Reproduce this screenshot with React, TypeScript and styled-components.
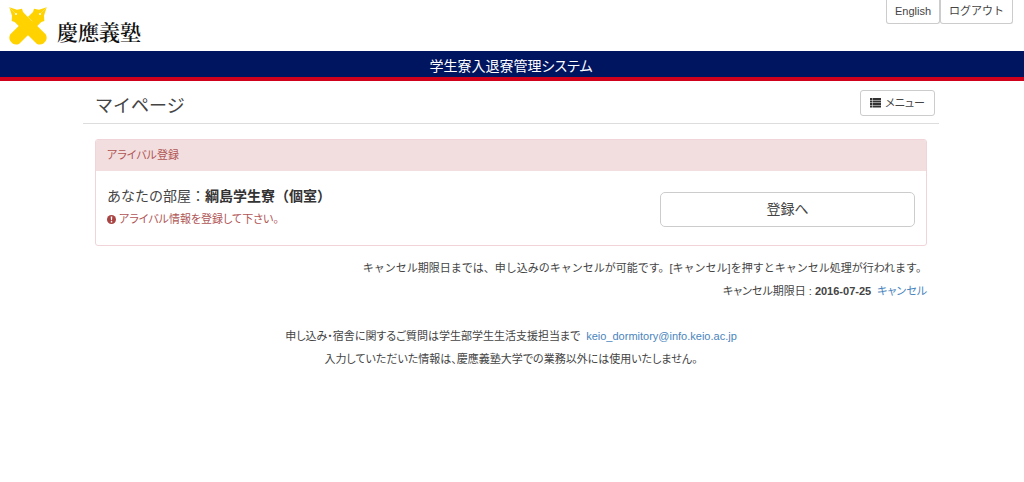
import React from "react";
import styled, { createGlobalStyle } from "styled-components";

const GlobalStyle = createGlobalStyle`
  * { box-sizing: border-box; }
  body {
    margin: 0;
    background: #fff;
    color: #444;
    font: 11px/15px "Liberation Sans", "Noto Sans CJK JP", sans-serif;
  }
`;

const Header = styled.header`
  display: flex;
  justify-content: space-between;
  align-items: flex-start;
  height: 51px;
  padding: 0 11px 0 9px;
`;

const Brand = styled.a`
  display: flex;
  gap: 10px;
  padding-top: 7px;
  color: #111;
  text-decoration: none;
`;

const BrandName = styled.span`
  padding-top: 10px;
  font: 600 21px/28px "Noto Serif CJK JP", "Noto Sans CJK JP", serif;
`;

const Button = styled.button`
  display: inline-flex;
  align-items: center;
  justify-content: center;
  gap: 4px;
  height: 26px;
  padding: 0 9px;
  border: 1px solid #ccc;
  border-radius: 3px;
  background: #fff;
  color: #444;
  font: inherit;
  white-space: nowrap;
  cursor: pointer;
`;

const MenuButton = styled(Button)`
  font-feature-settings: "palt";
`;

const TabButton = styled(Button)`
  height: 24px;
  padding: 0 8px;
  border-top: 0;
  border-radius: 0 0 3px 3px;
`;

const LargeButton = styled(Button)`
  flex: 0 1 255px;
  height: 35px;
  border-radius: 5px;
  font-size: 14px;
`;

const UserNav = styled.nav`
  display: flex;
`;

const Banner = styled.div`
  padding: 5px 2px 1px 0;
  border-bottom: 4px solid #d0021b;
  background: #001560;
  color: #fff;
  font-size: 14px;
  font-feature-settings: "palt";
  line-height: 20px;
  text-align: center;
`;

const Main = styled.main`
  padding-right: 2px;
`;

const Container = styled.div`
  max-width: 856px;
  margin: 0 auto;
`;

const TitleRow = styled.div`
  display: flex;
  align-items: flex-start;
  justify-content: space-between;
  padding: 9px 4px 4px 12px;
  border-bottom: 1px solid #ddd;
`;

const Title = styled.h1`
  margin: 0;
  padding-top: 3px;
  font-size: 18px;
  font-weight: 400;
  line-height: 26px;
`;

const Body = styled.div`
  padding: 15px 12px 0;
`;

const Panel = styled.section`
  border: 1px solid #f0d4d9;
  border-radius: 3px;
  overflow: hidden;
`;

const PanelHeading = styled.h2`
  margin: 0;
  padding: 8px 11px;
  background: #f2dede;
  color: #b05555;
  font-size: 11px;
  font-weight: 400;
  font-feature-settings: "palt";
  line-height: 15px;
`;

const PanelBody = styled.div`
  display: flex;
  justify-content: space-between;
  align-items: flex-end;
  padding: 15px 11px 18px;
`;

const Room = styled.p`
  margin: 0 0 6px;
  font-size: 14px;
  line-height: 20px;

  strong { color: #333; }
`;

const Alert = styled.p`
  display: flex;
  align-items: center;
  gap: 3px;
  margin: 0;
  color: #b05555;
  font-feature-settings: "palt";
`;

const Notes = styled.div`
  display: grid;
  gap: 8px;
  padding-top: 15px;
  text-align: right;

  p { margin: 0; }
`;

const Deadline = styled.p`
  font-feature-settings: "palt";
`;

const Contact = styled(Notes)`
  padding-top: 30px;
  font-feature-settings: "palt";
  text-align: center;
`;

const Link = styled.a`
  margin-left: 6px;
  color: #4a85bd;
  text-decoration: none;
`;

const PEN =
  "M15 13 L38 20 L53 17 L56 27 L124 94 Q130 104 124 114 Q114 129 98 123 L31 57 L22 54 L23 38 Z";

const PensLogo = () => (
  <svg width="38" height="38" viewBox="14 12 114 114" aria-hidden="true">
    <path d={PEN} fill="#ffd200" transform="translate(142 0) scale(-1 1)" />
    <path d={PEN} fill="#ffd200" />
    <path
      d="M60 31 L84 55 M17 15 L33 31 M125 15 L109 31"
      fill="none"
      stroke="#fff"
      strokeWidth="1"
    />
    <circle cx="35" cy="33" r="3" fill="#fff" />
    <circle cx="107" cy="33" r="3" fill="#fff" />
  </svg>
);

const ListIcon = () => (
  <svg width="11" height="10" viewBox="0 0 22 20" fill="#333" aria-hidden="true">
    <path d="M0 0h4v4H0zM5 0h17v4H5zM0 5h4v4H0zM5 5h17v4H5zM0 10h4v4H0zM5 10h17v4H5zM0 15h4v4H0zM5 15h17v4H5z" />
  </svg>
);

const AlertIcon = () => (
  <svg width="9" height="9" viewBox="0 0 9 9" aria-hidden="true">
    <circle cx="4.5" cy="4.5" r="4.5" fill="#a94442" />
    <path d="M3.7 1.5h1.6l-.3 3.7H4zM3.8 6h1.4v1.4H3.8z" fill="#fff" />
  </svg>
);

export default function App() {
  return (
    <>
      <GlobalStyle />
      <Header>
        <Brand href="#">
          <PensLogo />
          <BrandName>慶應義塾</BrandName>
        </Brand>
        <UserNav>
          <TabButton>English</TabButton>
          <TabButton>ログアウト</TabButton>
        </UserNav>
      </Header>
      <Banner>学生寮入退寮管理システム</Banner>
      <Main>
        <Container>
          <TitleRow>
            <Title>マイページ</Title>
            <MenuButton><ListIcon />メニュー</MenuButton>
          </TitleRow>
          <Body>
            <Panel>
              <PanelHeading>アライバル登録</PanelHeading>
              <PanelBody>
                <div>
                  <Room>あなたの部屋：<strong>綱島学生寮（個室）</strong></Room>
                  <Alert><AlertIcon />アライバル情報を登録して下さい。</Alert>
                </div>
                <LargeButton>登録へ</LargeButton>
              </PanelBody>
            </Panel>
            <Notes>
              <p>キャンセル期限日までは、申し込みのキャンセルが可能です。[キャンセル]を押すとキャンセル処理が行われます。</p>
              <Deadline>キャンセル期限日 : <strong>2016-07-25</strong><Link href="#cancel">キャンセル</Link></Deadline>
            </Notes>
            <Contact>
              <p>申し込み・宿舎に関するご質問は学生部学生生活支援担当まで<Link href="mailto:keio_dormitory@info.keio.ac.jp">keio_dormitory@info.keio.ac.jp</Link></p>
              <p>入力していただいた情報は、慶應義塾大学での業務以外には使用いたしません。</p>
            </Contact>
          </Body>
        </Container>
      </Main>
    </>
  );
}
